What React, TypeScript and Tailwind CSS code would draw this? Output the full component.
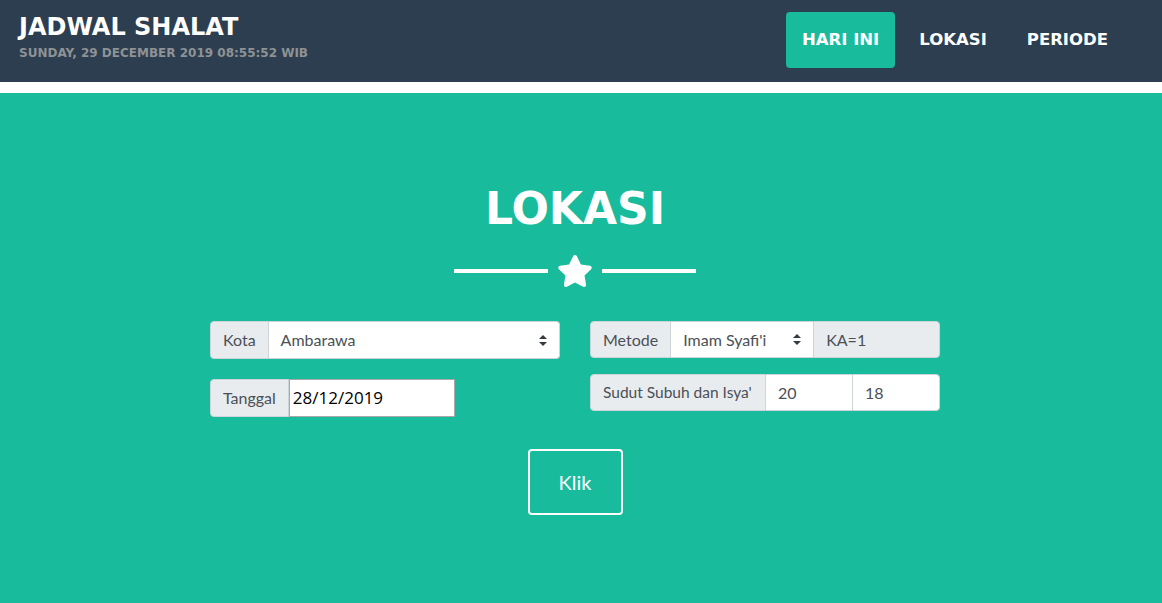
import React from "react";

const navItems = ["HARI INI", "LOKASI", "PERIODE"];

function Arrows() {
  return (
    <svg width="8" height="11" viewBox="0 0 8 11" className="shrink-0">
      <path d="M4 0L8 4H0z" fill="#343a40" />
      <path d="M4 11L0 7H8z" fill="#343a40" />
    </svg>
  );
}

function Star() {
  return (
    <svg width="36" height="32" viewBox="0 0 576 512">
      <path
        fill="white"
        d="M259.3 17.8L194 150.2 47.9 171.5c-26.2 3.8-36.7 36.1-17.7 54.6l105.7 103-25 145.5c-4.5 26.3 23.2 46 46.4 33.7L288 439.6l130.7 68.7c23.2 12.2 50.9-7.4 46.4-33.7l-25-145.5 105.7-103c19-18.5 8.5-50.8-17.7-54.6L382 150.2 316.7 17.8c-11.7-23.6-45.6-23.9-57.4 0z"
      />
    </svg>
  );
}

export default function App() {
  return (
    <div className="min-h-[603px] bg-[#18bc9c] font-['Lato',sans-serif] text-[16px]">
      <nav className="flex h-[82px] items-start justify-between bg-[#2c3e50] pl-[19px] pr-[38px] font-['DejaVu_Sans',sans-serif]">
        <div className="mt-[15px]">
          <h1 className="text-[24px] font-bold leading-[24px] text-white">JADWAL SHALAT</h1>
          <p className="mt-[8px] text-[12px] font-bold leading-[12px] text-[#8f9294]">
            SUNDAY, 29 DECEMBER 2019 08:55:52 WIB
          </p>
        </div>
        <ul className="mt-3 flex gap-2">
          {navItems.map((n, i) => (
            <li
              key={n}
              className={
                "rounded px-4 py-5 text-[16.5px] font-bold leading-4 text-white " +
                (i === 0 ? "bg-[#18bc9c]" : "")
              }
            >
              {n}
            </li>
          ))}
        </ul>
      </nav>
      <div className="h-[11px] bg-white" />

      <section className="flex flex-col items-center pr-[12px] pt-[94px]">
        <h2 className="font-['DejaVu_Sans',sans-serif] text-[44px] font-bold leading-[44px] text-white">
          LOKASI
        </h2>
        <div className="mt-6 flex items-center gap-[9px]">
          <div className="h-1 w-[94px] bg-white" />
          <Star />
          <div className="h-1 w-[94px] bg-white" />
        </div>

        <div className="mt-[34px] flex gap-[30px] text-[#495057]">
          <div className="w-[350px]">
            <div className="flex h-[38px]">
              <span className="flex items-center rounded-l border border-[#ced4da] bg-[#e9ecef] px-3">Kota</span>
              <div className="flex flex-1 items-center justify-between rounded-r border border-l-0 border-[#ced4da] bg-white pl-3 pr-3">
                <span>Ambarawa</span>
                <Arrows />
              </div>
            </div>
            <div className="mt-5 flex h-[38px] w-[245px]">
              <span className="flex items-center rounded-l border border-[#ced4da] bg-[#e9ecef] px-3">Tanggal</span>
              <input
                readOnly
                value="28/12/2019"
                className="min-w-0 flex-1 border border-[#a9a9a9] bg-white px-[3px] font-['Open_Sans',sans-serif] text-[17px] text-black outline-none"
              />
            </div>
          </div>

          <div className="w-[350px]">
            <div className="flex h-[37px]">
              <span className="flex items-center rounded-l border border-[#ced4da] bg-[#e9ecef] px-3">Metode</span>
              <div className="flex w-[142px] items-center justify-between border-y border-[#ced4da] bg-white pl-3 pr-3">
                <span>Imam Syafi'i</span>
                <Arrows />
              </div>
              <span className="flex flex-1 items-center rounded-r border border-[#ced4da] bg-[#e9ecef] px-3">KA=1</span>
            </div>
            <div className="mt-4 flex h-[37px]">
              <span className="flex w-[176px] shrink-0 items-center whitespace-nowrap rounded-l border border-[#ced4da] bg-[#e9ecef] px-3 text-[15.5px]">
                Sudut Subuh dan Isya'
              </span>
              <span className="flex w-[86px] items-center border-y border-[#ced4da] bg-white px-3">20</span>
              <span className="flex flex-1 items-center rounded-r border border-[#ced4da] bg-white px-3">18</span>
            </div>
          </div>
        </div>

        <button className="mt-8 flex h-[66px] w-[95px] items-center justify-center rounded border-2 border-white text-[20px] text-white">
          Klik
        </button>
      </section>
    </div>
  );
}
